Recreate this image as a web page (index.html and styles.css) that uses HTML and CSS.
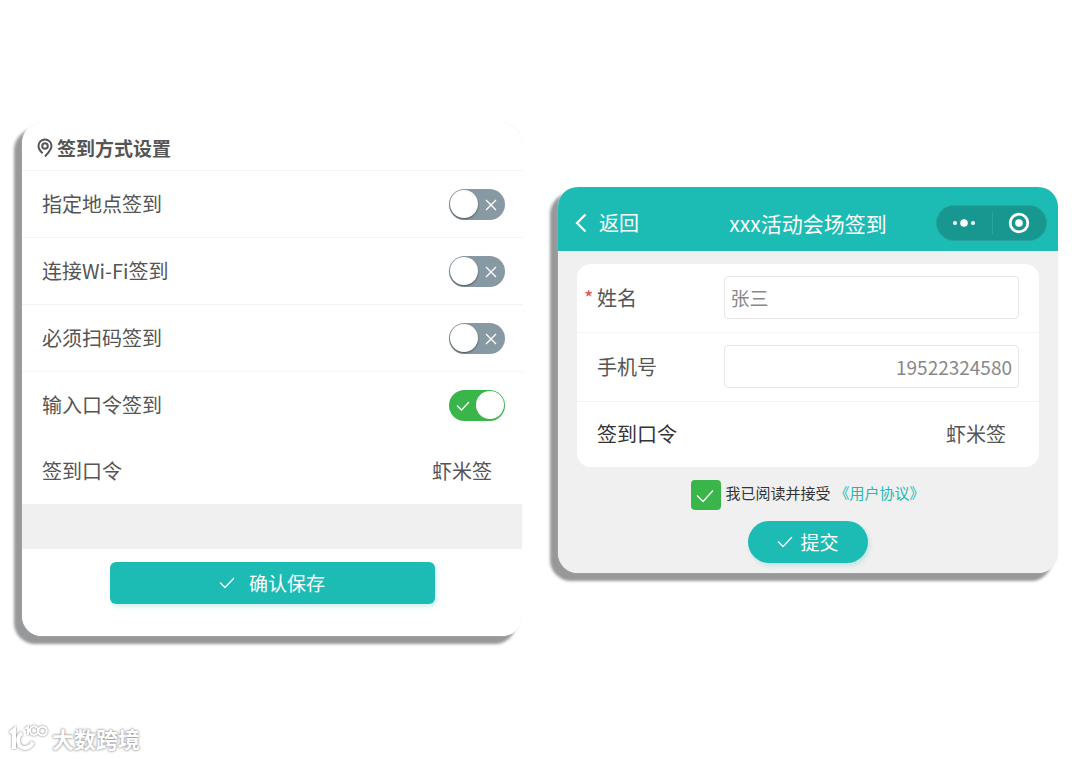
FILE: index.html
```html
<!DOCTYPE html>
<html lang="zh-CN">
<head>
<meta charset="utf-8">
<meta name="viewport" content="width=device-width, initial-scale=1">
<title>签到方式设置</title>
<link rel="stylesheet" href="styles.css">
</head>
<body>
<main class="cards">
  <form class="card settings">
    <h1 class="settings-title">
      <svg class="pin" viewBox="0 0 16 20" aria-hidden="true"><path d="M5.600 15.200C3 12.800 1.500 10.600 1.500 8a6.500 6.500 0 0 1 13 0c0 3.600-3 6.500-6.500 10.500"/><circle cx="8" cy="8" r="2.800"/></svg>
      签到方式设置
    </h1>
    <div class="row">
      <label for="place">指定地点签到</label>
      <span class="switch"><input type="checkbox" id="place"><svg class="mark cross" viewBox="0 0 12 12" aria-hidden="true"><path d="M1 1l10 10M11 1L1 11"/></svg></span>
    </div>
    <div class="row">
      <label for="wifi">连接Wi-Fi签到</label>
      <span class="switch"><input type="checkbox" id="wifi"><svg class="mark cross" viewBox="0 0 12 12" aria-hidden="true"><path d="M1 1l10 10M11 1L1 11"/></svg></span>
    </div>
    <div class="row">
      <label for="scan">必须扫码签到</label>
      <span class="switch"><input type="checkbox" id="scan"><svg class="mark cross" viewBox="0 0 12 12" aria-hidden="true"><path d="M1 1l10 10M11 1L1 11"/></svg></span>
    </div>
    <div class="row plain">
      <label for="code">输入口令签到</label>
      <span class="switch"><input type="checkbox" id="code" checked><svg class="mark tick" viewBox="0 0 14 10" aria-hidden="true"><path d="M1 4.500l4.500 4.500L13 1"/></svg></span>
    </div>
    <div class="row plain">
      <label for="word">签到口令</label>
      <input class="value" type="text" id="word" value="虾米签">
    </div>
    <div class="band"></div>
    <div class="save-area">
      <button class="button save" type="button"><svg class="check" viewBox="0 0 16 12" aria-hidden="true"><path d="M1 5.500l5 5L15 1"/></svg>确认保存</button>
    </div>
  </form>

  <form class="card signin">
    <header class="bar">
      <button class="back" type="button"><svg class="chevron" viewBox="0 0 12 20" aria-hidden="true"><path d="M10.500 1.500L2 10l8.500 8.500"/></svg>返回</button>
      <h2 class="bar-title">xxx活动会场签到</h2>
      <div class="capsule">
        <button class="capsule-button" type="button" aria-label="更多"><svg class="dots" viewBox="0 0 24 8" aria-hidden="true"><circle cx="3" cy="4" r="2"/><circle cx="12" cy="4" r="3.800"/><circle cx="21" cy="4" r="2"/></svg></button>
        <button class="capsule-button" type="button" aria-label="关闭"><svg class="target" viewBox="0 0 22 22" aria-hidden="true"><circle class="ring" cx="11" cy="11" r="8.800"/><circle class="core" cx="11" cy="11" r="3.800"/></svg></button>
      </div>
    </header>
    <div class="panel">
      <div class="field">
        <label class="required" for="name">姓名</label>
        <input class="box" type="text" id="name" value="张三">
      </div>
      <div class="field">
        <label for="phone">手机号</label>
        <input class="box end" type="tel" id="phone" value="19522324580">
      </div>
      <div class="field last">
        <label class="dark" for="password">签到口令</label>
        <input class="value" type="text" id="password" value="虾米签">
      </div>
    </div>
    <div class="agree">
      <span class="tickbox"><input type="checkbox" id="agree" checked><svg class="mark" viewBox="0 0 18 14" aria-hidden="true"><path d="M1 6.500l6 6L17 1.500"/></svg></span>
      <label for="agree">我已阅读并接受</label>
      <a href="#">《用户协议》</a>
    </div>
    <button class="button submit" type="button"><svg class="check" viewBox="0 0 16 12" aria-hidden="true"><path d="M1 5.500l5 5L15 1"/></svg>提交</button>
  </form>
</main>
<footer class="brand">
  <svg class="brand-logo" viewBox="0 0 40 30" aria-hidden="true"><path class="thick" d="M2 10l4-3v19M14 10c-6 4-5 15 3 15 4 0 6-2 8-6"/><path d="M17 6l3-2v8"/><circle cx="26" cy="7.500" r="4.200"/><circle cx="34.500" cy="8" r="4.200"/></svg>
  <span>大数跨境</span>
</footer>
</body>
</html>
```

FILE: styles.css
```css
* { box-sizing: border-box; }

body {
  margin: 0;
  min-height: 100vh;
  display: grid;
  grid-template-rows: 1fr auto 1fr;
  background: #fff;
  color: #555;
  font-family: "Noto Sans CJK SC", sans-serif;
  font-size: 20px;
  line-height: 28px;
}

input, button { font: inherit; color: inherit; }
button { border: 0; padding: 0; background: none; cursor: pointer; }
svg { fill: none; stroke: currentColor; flex: none; }

.cards {
  grid-row: 2;
  display: grid;
  grid-template-columns: 1fr 1fr;
  gap: 36px;
  align-items: center;
  padding: 0 22px;
}

.card {
  min-width: 0;
  border-radius: 20px;
  box-shadow: 0 0 1px #e4e6ea, -7px 7px 3px 1px #979899;
}

.settings { background: #fff; }

.settings-title {
  display: flex;
  align-items: center;
  gap: 4px;
  height: 48px;
  margin: 0;
  padding: 2px 15px 0;
  border-bottom: 1px solid #f2f3f4;
  font-size: 19px;
  font-weight: 700;
}

.pin { width: 16px; height: 20px; stroke-width: 2; }

.row {
  display: flex;
  align-items: center;
  justify-content: space-between;
  height: 67px;
  padding: 0 17px 0 20px;
  border-bottom: 1px solid #f2f3f4;
}

.row.plain { height: 66px; border: 0; }

.value {
  width: 200px;
  padding: 0 13px;
  border: 0;
  background: none;
  text-align: right;
}

.switch, .tickbox { position: relative; display: flex; }
.switch input, .tickbox input { appearance: none; margin: 0; cursor: pointer; }

.switch input {
  display: flex;
  align-items: center;
  width: 56px;
  height: 31px;
  padding: 1px;
  border-radius: 16px;
  background: #8799a3;
}

.switch input::before {
  content: "";
  width: 28px;
  height: 28px;
  border-radius: 50%;
  background: #fff;
  box-shadow: 0 1px 2px #0007;
}

.switch input:checked { justify-content: flex-end; background: #39b54a; }
.switch input:checked::before { box-shadow: none; }

.mark { position: absolute; color: #fff; pointer-events: none; }
.cross { right: 8px; top: 10px; width: 12px; height: 12px; stroke-width: 1.300; }
.tick { left: 7px; top: 11px; width: 14px; height: 10px; stroke-width: 1.300; }

.band { height: 45px; background: #f0f0f0; }

.save-area { display: flex; justify-content: center; padding: 13px 0 32px; }

.button {
  display: flex;
  align-items: center;
  justify-content: center;
  height: 42px;
  background: #1cbbb4;
  color: #fff;
  font-size: 19px;
  box-shadow: 2px 3px 4px #1cbbb433;
}

.check { width: 16px; height: 12px; stroke-width: 1.300; }
.save { gap: 14px; width: 65%; border-radius: 6px; }
.submit { gap: 7px; width: 120px; margin: 11px auto 10px; border-radius: 21px; }

.signin { background: #f0f0f0; }

.bar {
  display: grid;
  grid-template-columns: 1fr auto 1fr;
  align-items: center;
  height: 64px;
  padding: 8px 11px 0;
  border-radius: 20px 20px 0 0;
  background: #1cbbb4;
  color: #fff;
}

.back { display: flex; align-items: center; gap: 12px; padding-left: 6px; }
.chevron { width: 12px; height: 20px; stroke-width: 2.200; }
.bar-title { margin: 0; font-size: 21px; font-weight: 400; }

.capsule {
  justify-self: end;
  display: flex;
  width: 111px;
  height: 36px;
  border: 1px solid #27a39b;
  border-radius: 18px;
  background: #17978f;
}

.capsule-button { flex: 1; display: flex; align-items: center; justify-content: center; }
.capsule-button + .capsule-button { position: relative; }
.capsule-button + .capsule-button::before {
  content: "";
  position: absolute;
  left: 0;
  top: 6px;
  height: 22px;
  border-left: 1px solid #2aa39b;
}

.dots { width: 24px; height: 8px; fill: #fff; stroke: none; }
.target { width: 22px; height: 22px; }
.ring { stroke-width: 2.800; }
.core { fill: #fff; stroke: none; }

.panel {
  margin: 13px 19px 0;
  border-radius: 14px;
  background: #fff;
}

.field {
  display: flex;
  align-items: center;
  justify-content: space-between;
  height: 69px;
  padding: 0 20px;
  border-bottom: 1px solid #f2f3f4;
}

.field.last { height: 65px; border: 0; }
.dark { color: #333; }

.required { position: relative; }
.required::before {
  content: "*";
  position: absolute;
  left: -13px;
  color: #dd514c;
}

.box {
  width: 70%;
  height: 43px;
  padding: 0 6px;
  border: 1px solid #e6e6e6;
  border-radius: 4px;
  background: #fff;
  color: #888;
  font-size: 19px;
}

.box.end { text-align: right; }

.agree {
  display: flex;
  align-items: flex-start;
  justify-content: center;
  gap: 4px;
  margin-top: 13px;
  color: #333;
  font-size: 15px;
  line-height: 26px;
}

.agree a { color: #1cbbb4; text-decoration: none; }
.tickbox input { width: 30px; height: 30px; border-radius: 4px; background: #39b54a; }
.tickbox .mark { left: 5px; top: 9px; width: 18px; height: 14px; stroke-width: 1.300; }

.brand {
  grid-row: 3;
  align-self: end;
  display: flex;
  align-items: center;
  gap: 4px;
  padding: 0 8px 6px;
  color: #fff;
  font-size: 22px;
  font-weight: 700;
  text-shadow: 0 0 2px #888, 0 0 3px #aaa;
}

.brand-logo {
  width: 40px;
  height: 30px;
  stroke-width: 2;
  filter: drop-shadow(0 0 1px #777);
}

.thick { stroke-width: 4; }
```
